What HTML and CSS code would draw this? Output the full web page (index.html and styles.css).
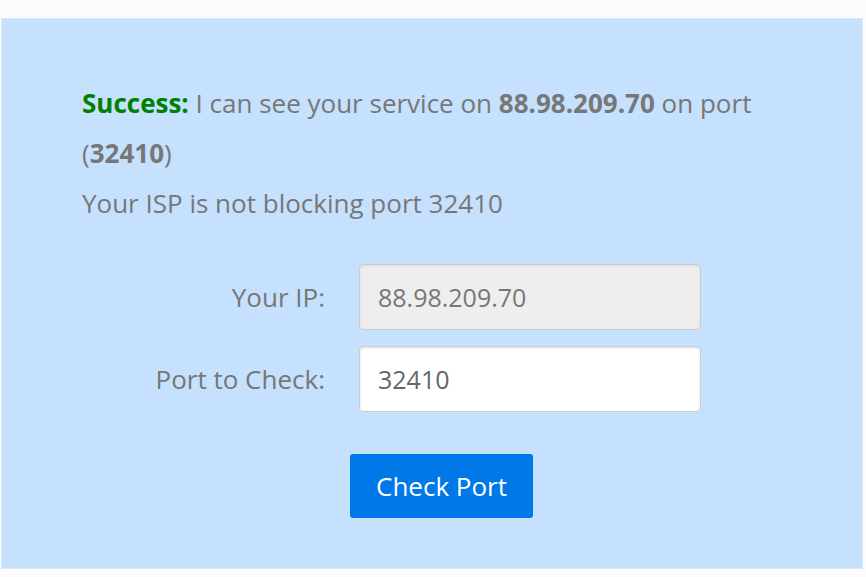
FILE: index.html
```html
<!DOCTYPE html>
<html>
<head>
<meta charset="utf-8">
<link rel="stylesheet" href="styles.css">
</head>
<body>
<div class="panel">
  <p class="msg"><span class="ok">Success:</span> I can see your service on <b>88.98.209.70</b> on port (<b>32410</b>)</p>
  <p class="msg">Your ISP is not blocking port 32410</p>
  <form class="form">
    <div class="row">
      <label class="lbl">Your IP:</label>
      <input class="field ro" type="text" value="88.98.209.70" readonly>
    </div>
    <div class="row">
      <label class="lbl">Port to Check:</label>
      <input class="field" type="text" value="32410">
    </div>
    <div class="controls">
      <button class="btn" type="button">Check Port</button>
    </div>
  </form>
</div>
</body>
</html>
```
FILE: styles.css
```css
html, body {
  margin: 0;
  padding: 0;
  background: #fcfcfc;
}
body {
  font-family: "Open Sans", "Noto Sans", sans-serif;
  color: #777;
}
.panel {
  box-sizing: border-box;
  margin: 18px 0 0 1px;
  width: 862px;
  height: 551px;
  background: #c5e1fd;
  border: 1px solid #d8eafd;
  padding: 59px 80px 0 80px;
}
.msg {
  margin: 0;
  font-size: 26px;
  line-height: 50px;
}
.msg b { font-weight: 700; }
.ok { color: #008000; font-weight: 700; }
.form {
  margin-top: 36px;
  display: flex;
  flex-direction: column;
  gap: 16px;
}
.row {
  display: flex;
  align-items: center;
}
.lbl {
  width: 243px;
  text-align: right;
  margin-right: 34px;
  font-size: 26px;
  color: #777;
}
.field {
  box-sizing: border-box;
  width: 342px;
  height: 66px;
  border: 1px solid #ccc;
  border-radius: 4px;
  box-shadow: inset 0 1px 3px #ddd;
  background: #fff;
  padding: 0 18px;
  font-family: inherit;
  font-size: 25px;
  color: #666;
  outline: none;
}
.field.ro {
  background: #eee;
  color: #777;
}
.controls {
  margin: 26px 0 0 268px;
}
.btn {
  box-sizing: border-box;
  width: 183px;
  height: 64px;
  border: none;
  border-radius: 3px;
  background: #0078e7;
  color: #fff;
  font-family: inherit;
  font-size: 26px;
  cursor: pointer;
}
```
